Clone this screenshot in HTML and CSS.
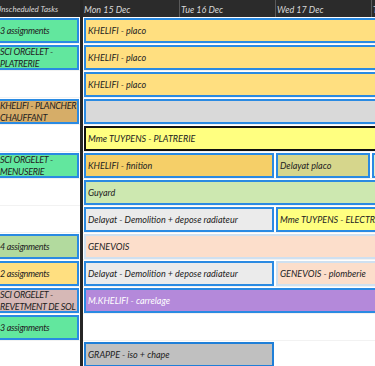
FILE: index.html
```html
<!DOCTYPE html>
<html lang="en">
<head>
    <meta charset="UTF-8">
    <meta name="viewport" content="width=device-width, initial-scale=1.0">
    <title>Planning</title>
    <link rel="stylesheet" href="styles.css">
</head>
<body>
    <div class="scheduler">
        <div class="header">
            <div class="head-left"><span>Unscheduled Tasks</span></div>
            <div class="separator"></div>
            <div class="head-days">
                <div class="day">Mon 15 Dec</div>
                <div class="day">Tue 16 Dec</div>
                <div class="day">Wed 17 Dec</div>
                <div class="day">Thu 18 Dec</div>
            </div>
        </div>
        <div class="grid">
            <div class="unscheduled">
                <div class="row"><div class="task green">3 assignments</div></div>
                <div class="row"><div class="task green">SCI ORGELET - PLATRERIE</div></div>
                <div class="row"></div>
                <div class="row"><div class="task tan">KHELIFI - PLANCHER CHAUFFANT</div></div>
                <div class="row"></div>
                <div class="row"><div class="task green">SCI ORGELET - MENUSERIE</div></div>
                <div class="row"></div>
                <div class="row"></div>
                <div class="row"><div class="task sage">4 assignments</div></div>
                <div class="row"><div class="task yellow">2 assignments</div></div>
                <div class="row"><div class="task rose">SCI ORGELET - REVETMENT DE SOL</div></div>
                <div class="row"><div class="task green">3 assignments</div></div>
                <div class="row"></div>
            </div>
            <div class="separator"></div>
            <div class="timeline">
                <div class="row"><div class="event yellow wide">KHELIFI - placo</div></div>
                <div class="row"><div class="event yellow wide">KHELIFI - placo</div></div>
                <div class="row"><div class="event yellow wide">KHELIFI - placo</div></div>
                <div class="row"><div class="event grey wide"></div></div>
                <div class="row"><div class="event lemon selected wide">Mme TUYPENS - PLATRERIE</div></div>
                <div class="row">
                    <div class="event gold days-2">KHELIFI - finition</div>
                    <div class="event olive days-1">Delayat placo</div>
                    <div class="event mint wide"></div>
                </div>
                <div class="row"><div class="event lime wide">Guyard</div></div>
                <div class="row">
                    <div class="event light days-2">Delayat - Demolition + depose radiateur</div>
                    <div class="event lemon wide">Mme TUYPENS - ELECTRICITE</div>
                </div>
                <div class="row"><div class="event peach wide">GENEVOIS</div></div>
                <div class="row">
                    <div class="event light days-2">Delayat - Demolition + depose radiateur</div>
                    <div class="event peach wide">GENEVOIS - plomberie</div>
                </div>
                <div class="row"><div class="event purple wide">M.KHELIFI - carrelage</div></div>
                <div class="row"></div>
                <div class="row"><div class="event silver days-2">GRAPPE - iso + chape</div></div>
            </div>
        </div>
    </div>
</body>
</html>
```

FILE: styles.css
```css
body{
    margin: 0;
    background-color: white;
    font-family: "Lato", "Open Sans", sans-serif;
    font-style: italic;
    font-size: 9px;
    color: #222;
    overflow: hidden;
}
.scheduler{
    width: 375px;
    height: 366px;
    overflow: hidden;
}
.header{
    display: grid;
    grid-template-columns: 80px 3px 1fr;
    height: 17px;
    background-color: #2b2b2b;
    color: #d8d8d8;
}
.head-left{
    overflow: hidden;
    white-space: nowrap;
    line-height: 19px;
    font-size: 8px;
}
.head-left span{
    margin-left: -4px;
}
.head-days{
    display: flex;
    overflow: hidden;
}
.day{
    flex: 0 0 96px;
    padding-left: 1px;
    line-height: 19px;
    white-space: nowrap;
    border-left: 1px solid #5a5a5a;
    box-sizing: border-box;
}
.day:first-child{
    border-left: none;
    padding-left: 1px;
}
.separator{
    background-color: #262626;
}
.grid{
    display: grid;
    grid-template-columns: 80px 3px 1fr;
}
.unscheduled, .timeline{
    overflow: hidden;
}
.row{
    height: 27px;
    display: flex;
    box-sizing: border-box;
    border-bottom: 1px solid #f2f2f2;
    padding: 1px 0;
}
.unscheduled .row{
    margin-left: -5px;
}
.task, .event{
    height: 25px;
    box-sizing: border-box;
    border: 2px solid #2a8ae2;
    display: flex;
    align-items: center;
    padding: 0 2px;
    line-height: 12px;
    overflow: hidden;
}
.task{
    flex: 1;
    margin-right: 1px;
    padding: 0 0 0 3px;
    letter-spacing: -0.3px;
}
.timeline .row{
    padding-left: 1px;
    gap: 2px;
}
.event{
    flex: 0 0 auto;
    white-space: nowrap;
}
.days-1{ width: 94px; }
.days-2{ width: 190px; }
.wide{ width: 400px; }
.selected{
    border-color: #111;
}
.green{ background-color: #62e79e; }
.tan{ background-color: #d6ad68; }
.sage{ background-color: #b2da9e; }
.yellow{ background-color: #ffdf80; }
.rose{ background-color: #d6b8b6; }
.grey{ background-color: #d9d9d9; }
.lemon{ background-color: #ffff80; }
.gold{ background-color: #f5cf68; }
.olive{ background-color: #d6d68c; }
.mint{ background-color: #dcefd0; }
.lime{ background-color: #cde8b0; }
.light{ background-color: #ebebeb; }
.peach{ background-color: #fcdecb; border-color: #cfe0f0; }
.purple{ background-color: #b489da; color: white; }
.silver{ background-color: #c0c0c0; border-color: #1f7fd8; }
```
